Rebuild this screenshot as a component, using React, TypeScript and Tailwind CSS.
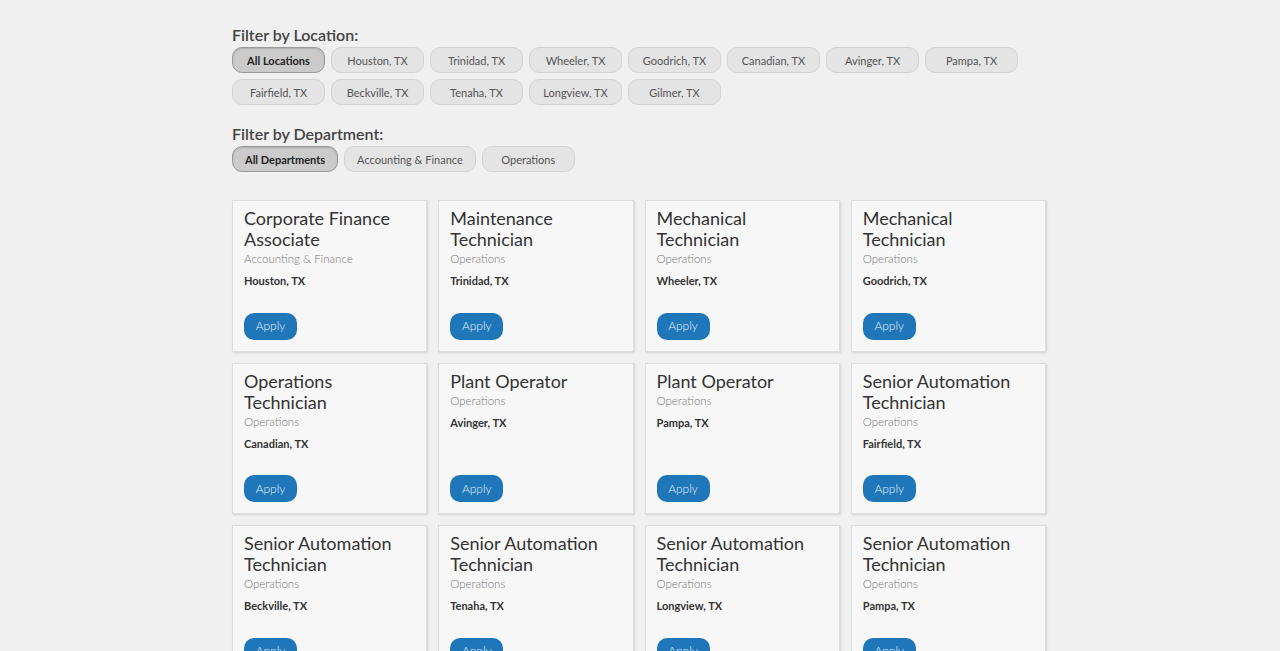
import { useState } from 'react';

const locations = [
  'All Locations',
  'Houston, TX',
  'Trinidad, TX',
  'Wheeler, TX',
  'Goodrich, TX',
  'Canadian, TX',
  'Avinger, TX',
  'Pampa, TX',
  'Fairfield, TX',
  'Beckville, TX',
  'Tenaha, TX',
  'Longview, TX',
  'Gilmer, TX',
];

const departments = ['All Departments', 'Accounting & Finance', 'Operations'];

const jobs = [
  { title: 'Corporate Finance Associate', dept: 'Accounting & Finance', loc: 'Houston, TX' },
  { title: 'Maintenance Technician', dept: 'Operations', loc: 'Trinidad, TX' },
  { title: 'Mechanical Technician', dept: 'Operations', loc: 'Wheeler, TX' },
  { title: 'Mechanical Technician', dept: 'Operations', loc: 'Goodrich, TX' },
  { title: 'Operations Technician', dept: 'Operations', loc: 'Canadian, TX' },
  { title: 'Plant Operator', dept: 'Operations', loc: 'Avinger, TX' },
  { title: 'Plant Operator', dept: 'Operations', loc: 'Pampa, TX' },
  { title: 'Senior Automation Technician', dept: 'Operations', loc: 'Fairfield, TX' },
  { title: 'Senior Automation Technician', dept: 'Operations', loc: 'Beckville, TX' },
  { title: 'Senior Automation Technician', dept: 'Operations', loc: 'Tenaha, TX' },
  { title: 'Senior Automation Technician', dept: 'Operations', loc: 'Longview, TX' },
  { title: 'Senior Automation Technician', dept: 'Operations', loc: 'Pampa, TX' },
];

const Pill = ({ label, active, onClick }: { label: string; active: boolean; onClick: () => void }) => (
  <button
    onClick={onClick}
    className={`h-[26px] min-w-[93px] px-3 rounded-[10px] border text-[11px] leading-none ${
      active
        ? 'bg-[#cbcbcb] border-[#9a9a9a] text-[#222] font-bold shadow-[inset_0_1px_2px_rgba(0,0,0,0.15)]'
        : 'bg-[#e4e4e4] border-[#d2d2d2] text-[#555]'
    }`}
  >
    {label}
  </button>
);

const JobCard = ({ title, dept, loc }: { title: string; dept: string; loc: string }) => (
  <div className="flex flex-col bg-[#f7f7f7] border border-[#dcdcdc] shadow-[1px_1px_2px_rgba(0,0,0,0.12)] px-[11px] pt-[7px] pb-[11px]">
    <h3 className="text-[18px] leading-[21px] text-[#333]">{title}</h3>
    <p className="text-[11.5px] leading-4 text-[#777] font-light mt-[1px]">{dept}</p>
    <p className="text-[11px] leading-4 text-[#333] font-bold mt-[6px] mb-[23px]">{loc}</p>
    <div className="mt-auto">
      <button className="h-[27px] w-[53px] rounded-[10px] bg-[#1f77b9] text-[12px] text-[#e6f1fb] font-light">Apply</button>
    </div>
  </div>
);

export default function App() {
  const [loc, setLoc] = useState('All Locations');
  const [dept, setDept] = useState('All Departments');

  return (
    <div className="min-h-screen bg-[#f0f0f0] font-['Lato','Noto_Sans',sans-serif]">
      <div className="w-[816px] mx-auto pt-[25px] pb-10">
        {/* Location filter */}
        <h2 className="text-[16px] leading-5 font-semibold text-[#444] mb-[2px]">Filter by Location:</h2>
        <div className="flex flex-wrap gap-[6px]">
          {locations.map((l) => (
            <Pill key={l} label={l} active={l === loc} onClick={() => setLoc(l)} />
          ))}
        </div>

        {/* Department filter */}
        <h2 className="text-[16px] leading-5 font-semibold text-[#444] mt-[19px] mb-[2px]">Filter by Department:</h2>
        <div className="flex flex-wrap gap-[6px]">
          {departments.map((d) => (
            <Pill key={d} label={d} active={d === dept} onClick={() => setDept(d)} />
          ))}
        </div>

        {/* Job cards */}
        <div className="w-[814px] grid grid-cols-4 gap-x-[11px] gap-y-[11px] mt-[28px]">
          {jobs.map((j, i) => (
            <JobCard key={i} {...j} />
          ))}
        </div>
      </div>
    </div>
  );
}
